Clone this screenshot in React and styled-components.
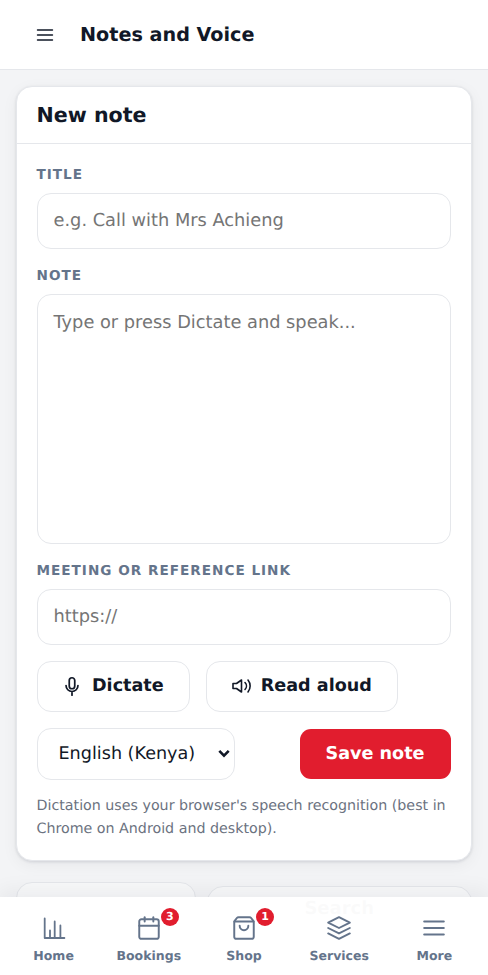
import React from "react";
import styled, { createGlobalStyle } from "styled-components";
import { Calendar, ShoppingBag } from "lucide-react";

const Global = createGlobalStyle`
  html, body { margin: 0; padding: 0; height: 100%; overflow: hidden; background: #f3f4f6; }
  body { font-family: "DejaVu Sans", sans-serif; color: #111827; text-rendering: geometricPrecision; }
  * { box-sizing: border-box; }
  input, textarea, select, button { text-rendering: geometricPrecision; }
  input::placeholder, textarea::placeholder { color: #757575; opacity: 1; }
`;
const Page = styled.div`height: 975px; display: flex; flex-direction: column; overflow: hidden; position: relative;`;
const TopBar = styled.header`
  height: 70px; flex: none; display: flex; align-items: center; gap: 25px; padding: 0 0 0 35px;
  background: #fff; border-bottom: 1px solid #e5e7eb;
`;
const Title = styled.h1`margin: 0; font-size: 19.2px; font-weight: 700; color: #111827;`;
const Main = styled.main`padding: 16px 16.5px 0 15.5px; display: flex; flex-direction: column; gap: 21px;`;
const Card = styled.section`
  background: #fff; border: 1px solid #e5e7eb; border-radius: 16px;
  box-shadow: 0 1px 3px rgba(15,23,42,.12), 0 4px 16px rgba(15,23,42,.05);
`;
const CardHead = styled.div`height: 56.5px; display: flex; align-items: center; padding: 0 20px; border-bottom: 1px solid #e5e7eb;`;
const CardTitle = styled.h2`margin: 0; font-size: 20.6px; font-weight: 700; color: #111827;`;
const CardBody = styled.div`padding: 20px 20px 19.5px; display: flex; flex-direction: column;`;
const Label = styled.label`
  display: block; font-size: 13.6px; line-height: 22px; font-weight: 700; letter-spacing: 1px;
  color: #64748b; text-transform: uppercase; margin-bottom: 7px;
`;
const Field = styled.input`
  display: block; width: 100%; height: 56.5px; padding: 0 16px; border: 1px solid #e5e7eb; border-radius: 14px;
  font: 400 17.8px "DejaVu Sans", sans-serif; background: #fff; margin-bottom: 16px; outline: none;
`;
const Area = styled.textarea`
  display: block; width: 100%; height: 249.5px; padding: 17px 16px 16px; border: 1px solid #e5e7eb; border-radius: 14px;
  font: 400 17.8px/22px "DejaVu Sans", sans-serif; background: #fff; margin-bottom: 16px; outline: none;
  &::-webkit-resizer { background: transparent; }
`;
const ActionRow = styled.div`display: flex; gap: 16px; margin-bottom: 16px;`;
const GhostButton = styled.button`
  height: 50.5px; padding: 0 25.5px 0 23px; display: flex; align-items: center; gap: 9.5px; background: #fff;
  border: 1px solid #e5e7eb; border-radius: 14px; font: 700 17.6px "DejaVu Sans", sans-serif; color: #111827;
  svg { flex: none; }
  span { margin-top: -1px; }
`;
const SpeakerSvg = styled.svg`margin-right: -3px;`;
const SaveRow = styled.div`display: flex; justify-content: space-between; align-items: center; margin-bottom: 14.5px;`;
const Select = styled.select`
  appearance: none; width: 198px; height: 52.5px; padding: 0 30px 0 21px; border: 1px solid #e5e7eb; border-radius: 14px;
  font: 400 17.6px "DejaVu Sans", sans-serif; color: #111827;
  background: #fff url("data:image/svg+xml,%3Csvg xmlns='http://www.w3.org/2000/svg' width='12' height='9' viewBox='0 0 12 9'%3E%3Cpath d='M1.3 1.8 6 6.6l4.7-4.8' fill='none' stroke='%23111827' stroke-width='2.6'/%3E%3C/svg%3E") no-repeat right 4px center;
`;
const SaveButton = styled.button`
  width: 151px; height: 49.5px; border: 0; border-radius: 11px; background: #e11d2e; color: #fff;
  font: 700 17.6px "DejaVu Sans", sans-serif;
`;
const Hint = styled.p`margin: 0; font-size: 14.24px; line-height: 23px; color: #6b7280;`;
const Lower = styled.div`display: grid; grid-template-columns: 180px 264.5px; gap: 11.5px; align-items: start;`;
const Stub = styled.div`
  height: 80px; background: #f8f9fa; border: 1px solid #e5e7eb; border-radius: 16px; margin-top: ${p => p.$top}px;
  text-align: center; padding-top: 11px; font-size: 18px; font-weight: 700; color: #111827;
`;
const BottomNav = styled.nav`
  position: absolute; left: 0; right: 0; bottom: 0; height: 78px; background: rgba(255,255,255,.98);
  display: grid; grid-template-columns: repeat(5, 1fr); padding: 0 6px;
  box-shadow: 0 -6px 20px rgba(15,23,42,.06);
`;
const NavItem = styled.div`
  position: relative; display: flex; flex-direction: column; align-items: center; padding-top: 18px; color: #64748b;
  svg { flex: none; }
`;
const NavLabel = styled.span`font-size: 12.5px; line-height: 18px; font-weight: 700; margin-top: 6px;`;
const Badge = styled.span`
  position: absolute; top: 11px; left: 50%; margin-left: 12px; width: 18px; height: 18px; border-radius: 50%;
  background: #e11d2e; color: #fff; font-size: 11px; font-weight: 700; display: flex; align-items: center; justify-content: center;
  padding-bottom: 1px;
`;

const Line = ({ size, box = 24, width = 2, d }) => (
  <svg width={size} height={size} viewBox={`0 0 ${box} ${box}`} fill="none" stroke="currentColor" strokeWidth={width} strokeLinecap="round" strokeLinejoin="round">
    <path d={d} />
  </svg>
);
const MENU = "M3 6h18M3 12h18M3 18h18";
const ChartIcon = () => <Line size={26} box={26} width={1.8} d="M3.7 3.5V23H23.4M9 15.5V22M13.7 6.5V22M19.4 10.5V22" />;
const LayersIcon = () => <Line size={26} width={1.8} d="M12 2 2 7l10 5 10-5-10-5zM2 17l10 5 10-5M2 12l10 5 10-5" />;
const BurgerIcon = () => <Line size={26} width={2} d={MENU} />;
const CalIcon = () => <Calendar size={26} strokeWidth={1.8} />;
const BagIcon = () => <ShoppingBag size={26} strokeWidth={1.8} />;
const MicIcon = () => (
  <Line size={22} width={1.9} d="M12 3a3 3 0 0 0-3 3v6a3 3 0 0 0 6 0V6a3 3 0 0 0-3-3zM5.5 11.5a6.5 6.5 0 0 0 13 0M12 18v4" />
);
const SpeakerIcon = () => (
  <SpeakerSvg width={24} height={24} viewBox="0 0 24 24" fill="none" stroke="currentColor" strokeWidth={1.6} strokeLinecap="round" strokeLinejoin="round">
    <path d="M3 9.5h3.5L11.5 6v12l-5-3.5H3zM15 8.5a5 5 0 0 1 0 7M18 6a9.5 9.5 0 0 1 0 12" />
  </SpeakerSvg>
);

const nav = [
  { label: "Home", Icon: ChartIcon },
  { label: "Bookings", Icon: CalIcon, badge: 3 },
  { label: "Shop", Icon: BagIcon, badge: 1 },
  { label: "Services", Icon: LayersIcon },
  { label: "More", Icon: BurgerIcon },
];

export default function App() {
  return (
    <Page>
      <Global />
      <TopBar>
        <Line size={20} width={1.7} d={MENU} />
        <Title>Notes and Voice</Title>
      </TopBar>
      <Main>
        <Card>
          <CardHead><CardTitle>New note</CardTitle></CardHead>
          <CardBody>
            <Label>Title</Label>
            <Field placeholder="e.g. Call with Mrs Achieng" />
            <Label>Note</Label>
            <Area placeholder="Type or press Dictate and speak..." />
            <Label>Meeting or reference link</Label>
            <Field placeholder="https://" />
            <ActionRow>
              <GhostButton><MicIcon /><span>Dictate</span></GhostButton>
              <GhostButton><SpeakerIcon /><span>Read aloud</span></GhostButton>
            </ActionRow>
            <SaveRow>
              <Select defaultValue="en-KE"><option value="en-KE">English (Kenya)</option></Select>
              <SaveButton>Save note</SaveButton>
            </SaveRow>
            <Hint>Dictation uses your browser's speech recognition (best in Chrome on Android and desktop).</Hint>
          </CardBody>
        </Card>
        <Lower>
          <Stub $top={0} />
          <Stub $top={4}>Search</Stub>
        </Lower>
      </Main>
      <BottomNav>
        {nav.map(({ label, Icon, badge }) => (
          <NavItem key={label}>
            <Icon />
            {badge ? <Badge>{badge}</Badge> : null}
            <NavLabel>{label}</NavLabel>
          </NavItem>
        ))}
      </BottomNav>
    </Page>
  );
}
